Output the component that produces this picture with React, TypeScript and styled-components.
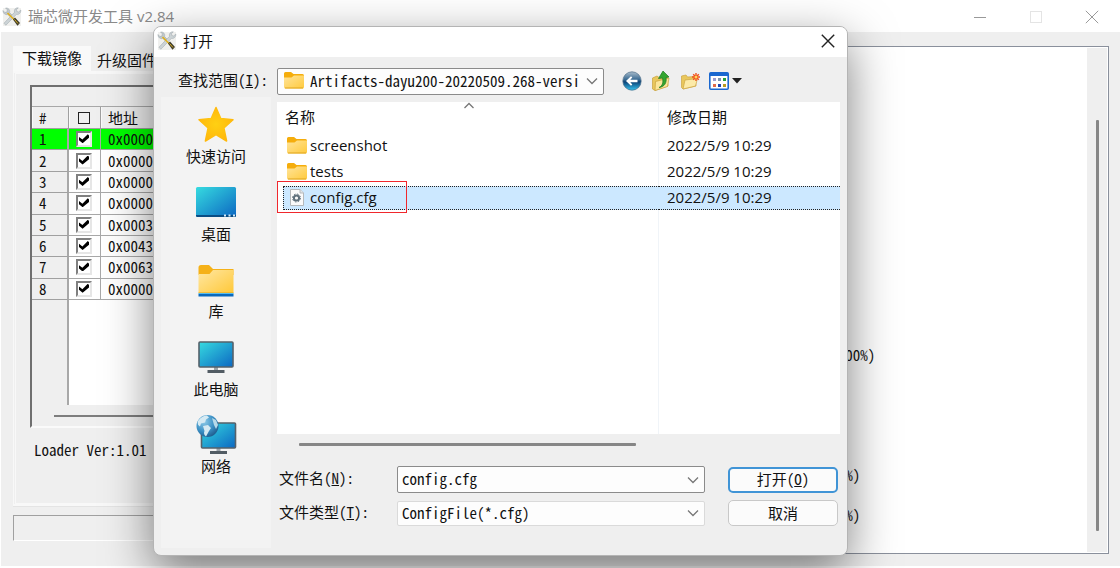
import React from "react";
import styled, { createGlobalStyle, css } from "styled-components";

const UI = `"Open Sans", "Noto Sans CJK SC", sans-serif`;
const FIXED = `"Noto Sans Mono CJK SC", "Liberation Mono", "Noto Sans CJK SC", monospace`;

const GlobalStyle = createGlobalStyle`
  *, *::before, *::after { box-sizing: border-box; }
  body { margin: 0; background: #fff; color: #111; font: 15px/20px ${UI}; }
  button, input, select, textarea { font: inherit; color: inherit; margin: 0; padding: 0; border: 0; background: none; border-radius: 0; }
`;

/* ---------- main window ---------- */

const Page = styled.div`
  position: relative;
  display: flex;
  min-height: 100vh;
  padding: 1px 0 2px 1px;
  overflow: hidden;
`;

const Window = styled.main`
  flex: 1;
  display: flex;
  flex-direction: column;
  min-width: 0;
  background: #efefef;
`;

const TitleBar = styled.header`
  display: flex;
  align-items: center;
  height: 31px;
  padding-left: 1px;
  background: #fff;
  color: #8a8a8a;
`;

const WindowTitle = styled.h1`
  flex: 1;
  margin: 0 0 0 6px;
  padding-bottom: 2px;
  font: 15px/20px ${UI};
`;

const CaptionButton = styled.button<{ $dim?: boolean }>`
  display: grid;
  place-items: center;
  width: 56px;
  height: 31px;
  color: ${(p) => (p.$dim ? "#e4e4e4" : "#999")};
`;

const Content = styled.div`
  flex: 1;
  display: flex;
  gap: 8px;
  padding: 14px 11px 12px 12px;
`;

const LeftColumn = styled.section`
  flex: 0 0 42%;
  display: flex;
  flex-direction: column;
  padding-bottom: 13px;
`;

const TabStrip = styled.div`
  display: flex;
  height: 25px;
`;

const Tab = styled.button<{ $active?: boolean }>`
  height: 25px;
  padding: ${(p) => (p.$active ? "0 9px 2px 9px" : "3px 6px 0")};
  background: ${(p) => (p.$active ? "#f9f9f9" : "transparent")};
  font: 15px/20px ${FIXED};
`;

const TabPane = styled.div`
  flex: 1;
  display: flex;
  flex-direction: column;
  padding: 11px 14px 43px 14px;
  border: 3px solid #f8f8f8;
  border-left: 3px double #f8f8f8;
  box-shadow: 0 1px #e4e4e4;
`;

const ImageList = styled.div`
  flex: 1;
  display: flex;
  flex-direction: column;
  border: 2px solid #6f6f6f;
  border-bottom-color: #fafafa;
`;

const ListCaption = styled.div`
  height: 20px;
  border-bottom: 1px solid #a8a8a8;
`;

const ImageTable = styled.table`
  width: 100%;
  height: 193px;
  border-spacing: 0;
  table-layout: fixed;
  font: 15px/18px ${FIXED};
`;

const HeadCell = styled.th<{ $width?: number }>`
  width: ${(p) => (p.$width ? `${p.$width}px` : "auto")};
  height: 22px;
  padding: 0 7px;
  border-right: 1px solid #a0a0a0;
  border-bottom: 1px solid #a0a0a0;
  box-shadow: inset 1px 0 #fafafa;
  text-align: left;
  font-weight: 400;
`;

const NumberCell = styled.td<{ $on?: boolean }>`
  padding: 0 7px;
  background: ${(p) => (p.$on ? "#00ff00" : "#efefef")};
  border-right: 2px solid #a8a8a8;
  border-bottom: 1px solid #a0a0a0;
`;

const Cell = styled.td<{ $on?: boolean }>`
  padding: 0 7px;
  background: ${(p) => (p.$on ? "#00ff00" : "#fff")};
  border-right: 1px solid #a8a8a8;
  border-bottom: 1px solid #a8a8a8;
`;

const TickBox = styled.input`
  appearance: none;
  display: block;
  width: 16px;
  height: 16px;
  background: #fff;
  border: 2px solid;
  border-color: #808080 #e6e6e6 #e6e6e6 #808080;
  &:checked::before {
    content: "";
    display: block;
    width: 10px;
    height: 9px;
    margin: 1px;
    background: #000;
    clip-path: polygon(0 30%, 34% 60%, 88% 0, 100% 14%, 100% 40%, 36% 100%, 0 66%);
  }
`;

const AllBox = styled.input`
  appearance: none;
  display: block;
  width: 12px;
  height: 12px;
  margin-left: 2px;
  border: 1px solid #222;
`;

const ListSpace = styled.div`
  flex: 1;
  background: #fff;
  &::before {
    content: "";
    display: block;
    width: 37px;
    height: 100%;
    background: #efefef;
    border-right: 2px solid #a8a8a8;
  }
`;

const ListScroll = styled.div`
  height: 21px;
  padding: 10px 22px 0;
  &::before {
    content: "";
    display: block;
    height: 2px;
    background: #7d7d7d;
  }
`;

const LoaderText = styled.p`
  margin: 12px 0 0 4px;
  font: 15px/20px ${FIXED};
`;

const StatusBox = styled.div`
  height: 26px;
  margin-top: 9px;
  border: 1px solid;
  border-color: #a0a0a0 #fff #fff #a0a0a0;
`;

const LogFrame = styled.section`
  flex: 1;
  display: flex;
  min-width: 0;
  padding: 1px;
  background: #fff;
  border: 1px solid #8a909c;
`;

const Log = styled.textarea`
  flex: 1;
  min-width: 0;
  padding: 17px 0 0 332px;
  resize: none;
  overflow: hidden;
  outline: none;
  font: 15px/20px ${FIXED};
`;

const LogScroll = styled.div`
  width: 20px;
  padding: 72px 8px 21px 9px;
  background: #efefef;
  &::before {
    content: "";
    display: block;
    height: 100%;
    border-radius: 1px;
    background: #868686;
  }
`;

/* ---------- open dialog ---------- */

const Dialog = styled.div`
  position: absolute;
  left: 153px;
  top: 26px;
  width: 695px;
  background: #efefef;
  border: 1px solid #b4b4b4;
  border-radius: 8px;
  overflow: hidden;
  box-shadow: 0 16px 48px rgba(0, 0, 0, 0.5);
`;

const DialogTitleBar = styled.header`
  display: flex;
  align-items: center;
  height: 30px;
  padding: 0 11px 2px 3px;
  background: #fff;
`;

const DialogTitle = styled.h2`
  flex: 1;
  margin: 0 0 0 6px;
  padding-bottom: 1px;
  font: 15px/20px ${UI};
`;

const CloseButton = styled.button`
  display: grid;
  place-items: center;
  width: 16px;
  height: 16px;
  color: #222;
`;

const LookInRow = styled.div`
  display: flex;
  align-items: center;
  height: 45px;
  padding: 3px 0 0 24px;
`;

const FieldLabel = styled.label<{ $width: number }>`
  width: ${(p) => p.$width}px;
  padding-bottom: 3px;
  font: 15px/20px ${FIXED};
  white-space: nowrap;
`;

const Combo = styled.div<{ $strong?: boolean; $width: number }>`
  display: flex;
  align-items: center;
  position: relative;
  width: ${(p) => p.$width}px;
  height: ${(p) => (p.$strong ? 27 : 25)}px;
  background: #fdfdfd;
  border: 1px solid ${(p) => (p.$strong ? "#8b8b8b" : "#dadada")};
  border-radius: 2px;
`;

const fieldText = css`
  flex: 1;
  min-width: 0;
  height: 22px;
  outline: none;
  font: 15px/20px ${FIXED};
`;

const ComboSelect = styled.select<{ $indent: number }>`
  ${fieldText}
  appearance: none;
  padding: 0 20px 1px ${(p) => p.$indent}px;
`;

const ComboInput = styled.input`
  ${fieldText}
  padding: 0 0 2px 4px;
`;

const ComboArrow = styled.span`
  position: absolute;
  right: 5px;
  display: flex;
  color: #777;
  pointer-events: none;
`;

const ComboIcon = styled.span`
  position: absolute;
  left: 6px;
  display: flex;
  padding-bottom: 2px;
  pointer-events: none;
`;

const Tools = styled.div`
  display: flex;
  align-items: center;
  gap: 9px;
  margin-left: 18px;
`;

const ToolButton = styled.button`
  display: flex;
  align-items: center;
  gap: 3px;
  height: 22px;
`;

const DialogBody = styled.div`
  display: flex;
  gap: 6px;
  padding: 0 7px;
`;

const Places = styled.nav`
  width: 110px;
  height: 451px;
  margin: -5px 0 7px;
  padding-top: 7px;
  background: #f3f3f3;
`;

const PlaceList = styled.ul`
  display: flex;
  flex-direction: column;
  justify-content: space-between;
  height: 372px;
  margin: 0;
  padding: 0;
  list-style: none;
`;

const Place = styled.button`
  display: flex;
  flex-direction: column;
  align-items: center;
  gap: 2px;
  width: 100%;
`;

const PlaceArt = styled.svg`
  overflow: visible;
`;

const FilePanel = styled.div`
  flex: 1;
  min-width: 0;
`;

const FileView = styled.div`
  position: relative;
  height: 332px;
  padding-left: 6px;
  background: linear-gradient(to right, #fff 381px, #f0f4f8 381px, #f0f4f8 382px, #fff 382px);
`;

const SortMark = styled.span`
  position: absolute;
  left: 186px;
  top: 0;
  display: flex;
  color: #777;
`;

const FileTable = styled.table`
  width: 100%;
  border-spacing: 0 2px;
  table-layout: fixed;
`;

const FileHead = styled.th<{ $width?: number }>`
  width: ${(p) => (p.$width ? `${p.$width}px` : "auto")};
  height: 28px;
  padding: 0 8px 3px;
  text-align: left;
  font-weight: 400;
  &:first-child {
    padding-left: 2px;
  }
`;

const FileCell = styled.td<{ $selected?: boolean }>`
  height: 24px;
  padding: 0 8px 2px;
  border: 1px dotted transparent;
  border-width: 1px 0;
  ${(p) =>
    p.$selected &&
    css`
      background: #cce8ff;
      border-color: #222;
    `}
  &:first-child {
    padding-left: 2px;
    border-left-width: 1px;
  }
`;

const FileName = styled.span`
  display: flex;
  align-items: center;
  gap: 2px;
`;

const IconSlot = styled.span`
  display: flex;
  justify-content: center;
  flex: 0 0 22px;
`;

const RedFrame = styled.div`
  position: absolute;
  left: 0;
  top: 79px;
  width: 130px;
  height: 32px;
  border: 1px solid #f0282d;
`;

const FileScroll = styled.div`
  width: 337px;
  height: 3px;
  margin: 9px 0 20px 22px;
  border-radius: 1px;
  background: #868686;
`;

const Form = styled.form`
  display: grid;
  grid-template-columns: 1fr 110px;
  row-gap: 7px;
  column-gap: 23px;
  align-items: center;
  padding: 0 3px 0 2px;
`;

const Field = styled.div`
  display: flex;
  align-items: center;
`;

const PushButton = styled.button<{ $primary?: boolean }>`
  height: 26px;
  padding-bottom: 1px;
  background: #fbfbfb;
  border: ${(p) => (p.$primary ? "2px solid #4094d6" : "1px solid #c8c8c8")};
  border-radius: 5px;
  font: 15px/20px ${FIXED};
`;

/* ---------- drawings ---------- */

const ToolsLogo = () => (
  <svg width="20" height="20" viewBox="0 0 20 20" aria-hidden="true">
    <rect x="1" y="1" width="18" height="18" fill="#f0f0ee" />
    <path d="M1 3.500L2.800 5.500 5 5 5.300 2.800 3.500 1C6.500 .6 8.300 3 7.600 5.600L10.500 8.500 8.700 10.300 5.800 7.500C3.200 8.200 .8 6.300 1 3.500Z" fill="#c0c8cc" stroke="#9aa4aa" strokeWidth=".5" />
    <path d="M18.800 3L16.700 5 14.800 4.500 14.500 2.700 16.300 .8C13.500 .6 11.800 2.800 12.500 5.300L2 16.200 3.800 18.300 14.500 7.300C17 8 19 5.800 18.800 3Z" fill="#ccd3d6" stroke="#98a2a8" strokeWidth=".5" />
    <path d="M5.500 6l7 7" stroke="#e0b01c" strokeWidth="1.600" />
    <path d="M11 12.500l2-2 5 5.500-2.500 2.700Z" fill="#3e3a28" />
    <path d="M12.500 12.500l3.500 4" stroke="#d9b226" strokeWidth="1" />
  </svg>
);

const Cross = ({ width = 1 }: { width?: number }) => (
  <svg width="14" height="14" viewBox="0 0 14 14" stroke="currentColor" strokeWidth={width} aria-hidden="true">
    <path d="M.8 .8l12.400 12.400M13.200 .8L.8 13.200" />
  </svg>
);

const Chevron = ({ up }: { up?: boolean }) => (
  <svg width="12" height="8" viewBox="0 0 12 8" fill="none" stroke="currentColor" strokeWidth="1.300" aria-hidden="true">
    <path d={up ? "M1.500 6L6 1.500 10.500 6" : "M1 1.500L6 6.500 11 1.500"} />
  </svg>
);

const SmallFolder = () => (
  <svg width="20" height="17" viewBox="0 0 20 17" aria-hidden="true">
    <defs>
      <linearGradient id="sf" x1="0" y1="0" x2="1" y2="1">
        <stop offset="0" stopColor="#ffe49a" />
        <stop offset="1" stopColor="#ffca3d" />
      </linearGradient>
    </defs>
    <path d="M0 1.500Q0 0 1.500 0H7l2.500 2H18.500Q20 2 20 3.500V9H0Z" fill="#f5ad0c" />
    <path d="M0 5.500H7.500L10 3.500H20V15Q20 16.500 18.500 16.500H1.500Q0 16.500 0 15Z" fill="url(#sf)" />
    <path d="M1 16h18" stroke="#dfa51f" />
  </svg>
);

const ConfigFile = () => (
  <svg width="14" height="17" viewBox="0 0 14 17" aria-hidden="true">
    <path d="M.5 .5H10L13.500 4V16.500H.5Z" fill="#fafafa" stroke="#b5b9bc" />
    <path d="M10 .5V4h3.500" fill="#e4e6e8" stroke="#b5b9bc" />
    <circle cx="6.500" cy="9" r="2.600" fill="none" stroke="#60717c" strokeWidth="2" />
    <circle cx="6.500" cy="9" r="4" fill="none" stroke="#60717c" strokeWidth="1" strokeDasharray="1.600 1.540" />
  </svg>
);

const BackIcon = () => (
  <svg width="20" height="20" viewBox="0 0 20 20" aria-hidden="true">
    <defs>
      <linearGradient id="bk" x1="0" y1="0" x2="0" y2="1">
        <stop offset="0" stopColor="#a9bccb" />
        <stop offset=".45" stopColor="#32658f" />
        <stop offset=".55" stopColor="#0c4378" />
        <stop offset="1" stopColor="#35c3f0" />
      </linearGradient>
    </defs>
    <circle cx="10" cy="10" r="9.200" fill="url(#bk)" stroke="#4c6c86" strokeWidth=".7" />
    <path d="M4 10L9 5.300 10.300 6.500 8.300 8.700H15.500V11.300H8.300L10.300 13.500 9 14.700Z" fill="#fff" />
  </svg>
);

const UpIcon = () => (
  <svg width="20" height="22" viewBox="0 0 20 22" aria-hidden="true">
    <path d="M1.500 8L6 6l2 1.500 8-2L17 16 4 20.500 1.500 19Z" fill="#e9c75c" stroke="#c9a23c" strokeWidth=".7" />
    <path d="M4.500 11.500L18 8l-1.500 8.500L4 20.500Z" fill="#fbe69a" stroke="#c9a23c" strokeWidth=".7" />
    <path d="M8 17.500c3.500-1.500 4.500-5 3.500-9.500L7.500 8.500 12 1l6 6-3 .5c1 5-1.500 9.500-7 10Z" fill="#34a52f" stroke="#1d7a20" strokeWidth=".7" />
  </svg>
);

const NewFolderIcon = () => (
  <svg width="20" height="18" viewBox="0 0 20 18" aria-hidden="true">
    <path d="M1.500 4L6 3l1.500 2L15 4.500 16 14 3 17 1.500 15.500Z" fill="#e9c75c" stroke="#cda542" strokeWidth=".7" />
    <path d="M5 8l12.500-1.500L15.500 14 3 17Z" fill="#fceaa8" stroke="#cda542" strokeWidth=".7" />
    <path d="M16 1v8M12 5h8M13.200 2.200l5.600 5.600M18.800 2.200l-5.600 5.600" stroke="#f0501e" strokeWidth="1.400" />
    <circle cx="16" cy="5" r="1.500" fill="#ffd35c" />
  </svg>
);

const ViewsIcon = () => (
  <svg width="20" height="18" viewBox="0 0 20 18" aria-hidden="true">
    <rect x=".8" y=".8" width="18.400" height="16.400" rx="1" fill="#fff" stroke="#1a68d0" strokeWidth="1.600" />
    <path d="M1 2.500h18" stroke="#1a68d0" strokeWidth="3" />
    <path d="M4 6h3v3H4z" fill="#9b9bd0" />
    <path d="M9 6h3v3H9z" fill="#7d95ae" />
    <path d="M14 6h3v3h-3z" fill="#23a040" />
    <path d="M4 12h3v3H4z" fill="#e06a4a" />
    <path d="M9 12h3v3H9z" fill="#1d46b5" />
    <path d="M14 12h3v3h-3z" fill="#b99a20" />
  </svg>
);

const DropMark = () => (
  <svg width="10" height="6" viewBox="0 0 10 6" aria-hidden="true">
    <path d="M0 0H10L5 5.500Z" fill="#222" />
  </svg>
);

const ScreenPaint = () => (
  <defs>
    <linearGradient id="scr" x1="0" y1="0" x2="1" y2="1">
      <stop offset="0" stopColor="#36dbe0" />
      <stop offset="1" stopColor="#0c67c2" />
    </linearGradient>
    <linearGradient id="fld" x1="0" y1="0" x2="1" y2="1">
      <stop offset="0" stopColor="#ffe7a3" />
      <stop offset="1" stopColor="#ffc838" />
    </linearGradient>
    <radialGradient id="str" cx=".5" cy=".5" r=".5">
      <stop offset="0" stopColor="#ffd013" />
      <stop offset="1" stopColor="#ffb90c" />
    </radialGradient>
    <radialGradient id="glb" cx=".35" cy=".3" r=".75">
      <stop offset="0" stopColor="#8ecbe8" />
      <stop offset=".6" stopColor="#3a8fc4" />
      <stop offset="1" stopColor="#1f5c8d" />
    </radialGradient>
  </defs>
);

const StarIcon = () => (
  <path
    d="M20 3.500L24.800 14.500 37 15.800 27.900 24 30.600 37 20 30.600 9.400 37 12.100 24 3 15.800 15.200 14.500Z"
    fill="url(#str)"
    stroke="url(#str)"
    strokeWidth="1.500"
    strokeLinejoin="round"
  />
);

const DesktopIcon = () => (
  <>
    <rect x="0" y="5" width="40" height="30" rx="1.500" fill="url(#scr)" />
    <path d="M0 33h40v.5Q40 35 38.500 35h-37Q0 35 0 33.500Z" fill="#0a4d84" />
    <path d="M28 33.500h2M32.500 33.500h2M37 33.500h2" stroke="#d5ecfa" strokeWidth="2" />
  </>
);

const LibraryIcon = () => (
  <>
    <path d="M2.500 8.500Q2.500 6 5 6H13l4 4H37.500V16h-35Z" fill="#f5b118" />
    <path d="M2.500 15H13.500L17 11H37.500V34h-35Z" fill="url(#fld)" />
    <path d="M2.500 34h35" stroke="#e1a51c" />
    <path d="M2.500 34.500h35" stroke="#56bdf0" strokeWidth="1" />
    <path d="M2.500 36.200h35" stroke="#0a69bd" strokeWidth="2.400" />
  </>
);

const Monitor = () => (
  <>
    <path d="M18 29h4v5h-4z" fill="#9aa3aa" />
    <path d="M11.500 33h17v3h-17z" fill="#525c64" />
    <rect x="3" y="5" width="34" height="25" rx="1" fill="url(#scr)" stroke="#56616a" strokeWidth="1.600" />
  </>
);

const NetworkIcon = () => (
  <>
    <g transform="translate(2.500 4)">
      <Monitor />
    </g>
    <circle cx="11.500" cy="12" r="11" fill="url(#glb)" />
    <path d="M2 7Q6 1.500 11 1.500l2 2-3 2-1 3-4 1-1 3Q1 11 2 7Z" fill="#d5eaf3" />
    <path d="M7 12l5-1 3 3-2 3-3 5.500Q7 20 8.500 17Z" fill="#d5eaf3" />
    <path d="M16 4l4 2 2 5-2 4-2-4Z" fill="#b5d9e9" />
  </>
);

/* ---------- data ---------- */

const images = ["0x0000", "0x0000", "0x0000", "0x0000", "0x0003", "0x0043", "0x0063", "0x0000"];

const places = [
  { name: "快速访问", Art: StarIcon },
  { name: "桌面", Art: DesktopIcon },
  { name: "库", Art: LibraryIcon },
  { name: "此电脑", Art: Monitor },
  { name: "网络", Art: NetworkIcon },
];

const files = [
  { name: "screenshot", folder: true },
  { name: "tests", folder: true },
  { name: "config.cfg", folder: false },
];

const logText = "\n".repeat(14) + "  (100%)" + "\n".repeat(6) + "(100%)" + "\n\n" + "(100%)";

function OpenDialog() {
  return (
    <Dialog role="dialog" aria-labelledby="dialog-title">
      <DialogTitleBar>
        <ToolsLogo />
        <DialogTitle id="dialog-title">打开</DialogTitle>
        <CloseButton aria-label="关闭">
          <Cross width={1.4} />
        </CloseButton>
      </DialogTitleBar>
      <LookInRow>
        <FieldLabel htmlFor="look-in" $width={99}>
          查找范围(<u>I</u>):
        </FieldLabel>
        <Combo $strong $width={327}>
          <ComboIcon>
            <SmallFolder />
          </ComboIcon>
          <ComboSelect id="look-in" $indent={32}>
            <option>Artifacts-dayu200-20220509.268-versi</option>
          </ComboSelect>
          <ComboArrow>
            <Chevron />
          </ComboArrow>
        </Combo>
        <Tools>
          <ToolButton aria-label="后退">
            <BackIcon />
          </ToolButton>
          <ToolButton aria-label="向上一级">
            <UpIcon />
          </ToolButton>
          <ToolButton aria-label="新建文件夹">
            <NewFolderIcon />
          </ToolButton>
          <ToolButton aria-label="查看">
            <ViewsIcon />
            <DropMark />
          </ToolButton>
        </Tools>
      </LookInRow>
      <DialogBody>
        <Places>
          <PlaceList>
            {places.map(({ name, Art }) => (
              <li key={name}>
                <Place>
                  <PlaceArt width="40" height="40" viewBox="0 0 40 40" aria-hidden="true">
                    <ScreenPaint />
                    <Art />
                  </PlaceArt>
                  {name}
                </Place>
              </li>
            ))}
          </PlaceList>
        </Places>
        <FilePanel>
          <FileView>
            <SortMark>
              <Chevron up />
            </SortMark>
            <FileTable>
              <thead>
                <tr>
                  <FileHead $width={376}>名称</FileHead>
                  <FileHead>修改日期</FileHead>
                </tr>
              </thead>
              <tbody>
                {files.map((f) => (
                  <tr key={f.name}>
                    <FileCell $selected={!f.folder}>
                      <FileName>
                        <IconSlot>{f.folder ? <SmallFolder /> : <ConfigFile />}</IconSlot>
                        {f.name}
                      </FileName>
                    </FileCell>
                    <FileCell $selected={!f.folder}>2022/5/9 10:29</FileCell>
                  </tr>
                ))}
              </tbody>
            </FileTable>
            <RedFrame />
          </FileView>
          <FileScroll />
          <Form onSubmit={(e) => e.preventDefault()}>
            <Field>
              <FieldLabel htmlFor="file-name" $width={118}>
                文件名(<u>N</u>):
              </FieldLabel>
              <Combo $strong $width={308}>
                <ComboInput id="file-name" defaultValue="config.cfg" />
                <ComboArrow>
                  <Chevron />
                </ComboArrow>
              </Combo>
            </Field>
            <PushButton type="submit" $primary>
              打开(<u>O</u>)
            </PushButton>
            <Field>
              <FieldLabel htmlFor="file-type" $width={118}>
                文件类型(<u>T</u>):
              </FieldLabel>
              <Combo $width={308}>
                <ComboSelect id="file-type" $indent={4}>
                  <option>ConfigFile(*.cfg)</option>
                </ComboSelect>
                <ComboArrow>
                  <Chevron />
                </ComboArrow>
              </Combo>
            </Field>
            <PushButton type="button">取消</PushButton>
          </Form>
        </FilePanel>
      </DialogBody>
    </Dialog>
  );
}

export default function App() {
  return (
    <>
      <GlobalStyle />
      <Page>
        <Window>
          <TitleBar>
            <ToolsLogo />
            <WindowTitle>瑞芯微开发工具 v2.84</WindowTitle>
            <CaptionButton aria-label="最小化">
              <svg width="14" height="14" viewBox="0 0 14 14" stroke="currentColor" aria-hidden="true">
                <path d="M1 7.500h12" />
              </svg>
            </CaptionButton>
            <CaptionButton $dim aria-label="最大化">
              <svg width="12" height="12" viewBox="0 0 12 12" fill="none" stroke="currentColor" aria-hidden="true">
                <rect x=".5" y=".5" width="11" height="11" />
              </svg>
            </CaptionButton>
            <CaptionButton aria-label="关闭">
              <Cross />
            </CaptionButton>
          </TitleBar>
          <Content>
            <LeftColumn>
              <TabStrip role="tablist">
                <Tab role="tab" aria-selected $active>
                  下载镜像
                </Tab>
                <Tab role="tab">升级固件</Tab>
              </TabStrip>
              <TabPane>
                <ImageList>
                  <ListCaption />
                  <ImageTable>
                    <thead>
                      <tr>
                        <HeadCell $width={37}>#</HeadCell>
                        <HeadCell $width={32}>
                          <AllBox type="checkbox" aria-label="全选" />
                        </HeadCell>
                        <HeadCell>地址</HeadCell>
                      </tr>
                    </thead>
                    <tbody>
                      {images.map((address, i) => (
                        <tr key={i}>
                          <NumberCell $on={i === 0}>{i + 1}</NumberCell>
                          <Cell $on={i === 0}>
                            <TickBox type="checkbox" defaultChecked aria-label={`${i + 1}`} />
                          </Cell>
                          <Cell $on={i === 0}>{address}</Cell>
                        </tr>
                      ))}
                    </tbody>
                  </ImageTable>
                  <ListSpace />
                  <ListScroll />
                </ImageList>
                <LoaderText>Loader Ver:1.01</LoaderText>
              </TabPane>
              <StatusBox />
            </LeftColumn>
            <LogFrame>
              <Log readOnly aria-label="日志" value={logText} />
              <LogScroll />
            </LogFrame>
          </Content>
        </Window>
        <OpenDialog />
      </Page>
    </>
  );
}
